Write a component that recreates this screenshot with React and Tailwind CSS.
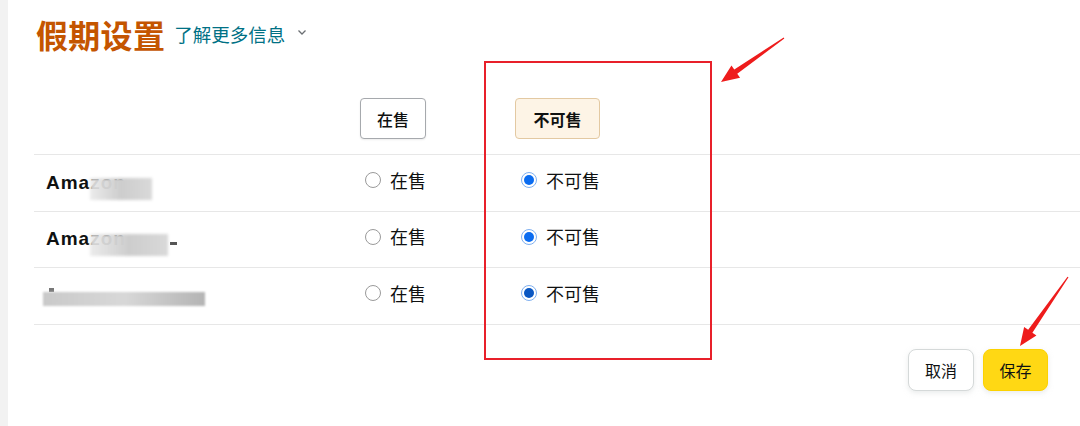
import React from "react";

const rows = [
  { name: "Amazon", blur: "w-[62px]", tail: false },
  { name: "Amazon", blur: "w-[78px]", tail: true },
  { name: "", blur: "", tail: false },
];

function Radio({ checked, dark }) {
  if (!checked) {
    return <span className="w-[16px] h-[16px] rounded-full border border-[#9a9a9a] bg-white shrink-0" />;
  }
  return (
    <span className="w-[16px] h-[16px] rounded-full border border-[#7fb0f0] bg-white shrink-0 flex items-center justify-center">
      <span className={`w-[10px] h-[10px] rounded-full ${dark ? "bg-[#0a57c2]" : "bg-[#0b6cf0]"}`} />
    </span>
  );
}

// tapered annotation arrow, computed from tail -> tip
function Arrow({ x1, y1, x2, y2 }) {
  const len = Math.hypot(x2 - x1, y2 - y1);
  const dx = (x2 - x1) / len;
  const dy = (y2 - y1) / len;
  const nx = -dy;
  const ny = dx;
  const head = 18;
  const cx = x2 - dx * head;
  const cy = y2 - dy * head;
  const p = (x, y, w) => `${x + nx * w},${y + ny * w}`;
  const pts = [
    p(x1, y1, 0.6),
    p(cx, cy, 2.6),
    p(cx, cy, 7.5),
    `${x2},${y2}`,
    p(cx, cy, -7.5),
    p(cx, cy, -2.6),
    p(x1, y1, -0.6),
  ].join(" ");
  return <polygon points={pts} fill="#ee1c1c" />;
}

export default function App() {
  const cjk = { fontFamily: '"Noto Sans CJK SC", "Noto Sans", sans-serif' };
  return (
    <div className="relative w-[1080px] h-[426px] flex bg-white overflow-hidden" style={cjk}>
      <div className="w-[8px] bg-[#f2f2f2] shrink-0" />
      <div className="flex-1 pl-[26px] flex flex-col">
        <div className="mt-[12px] h-[44px] flex items-center pl-[2px]">
          <span className="text-[32px] font-bold text-[#c45500] leading-none tracking-[0.3px]">假期设置</span>
          <span className="ml-[9px] text-[18.5px] text-[#007185] leading-none">了解更多信息</span>
          <svg width="10" height="7" viewBox="0 0 10 7" className="ml-[12px] -mt-[4px]" fill="none">
            <path d="M1.5 1.5L5 5L8.5 1.5" stroke="#6b6f73" strokeWidth="1.3" />
          </svg>
        </div>

        <div className="grid grid-cols-[326px_155px_1fr] pt-[42px] pb-[15px] border-b border-[#e7e7e7]">
          <div />
          <div>
            <span className="inline-flex items-center justify-center w-[66px] h-[41px] rounded-[4px] border border-[#a6a9ad] bg-white text-[16px] font-medium text-[#0f1111] shadow-[0_1px_2px_rgba(0,0,0,0.08)]">
              在售
            </span>
          </div>
          <div>
            <span className="inline-flex items-center justify-center w-[85px] h-[41px] rounded-[4px] border border-[#e3c9a2] bg-[#fdf4e6] text-[16px] font-bold text-[#0f1111]">
              不可售
            </span>
          </div>
        </div>

        {rows.map((r, i) => (
          <div key={i} className="grid grid-cols-[326px_155px_1fr] h-[56.6px] border-b border-[#e7e7e7] items-center">
            <div className="pl-[12px] flex items-center h-full">
              {r.name ? (
                <div className="relative flex items-center">
                  <span className="text-[19px] font-bold text-[#0f1111] tracking-[1px]" style={{ fontFamily: '"Liberation Sans", Arial, sans-serif' }}>
                    {r.name}
                  </span>
                  {r.tail && <span className="ml-[44px] mt-[8px] w-[7px] h-[3px] bg-[#555] blur-[0.4px]" />}
                  <span className={`absolute left-[44px] top-[9px] h-[22px] ${r.blur} bg-gradient-to-r from-[#e9e9e9]/90 via-[#cdcdcd] to-[#d9d9d9] blur-[1.5px]`} />
                </div>
              ) : (
                <div className="relative flex items-center -ml-[3px] mt-[6px]">
                  <span className="absolute left-[6px] -top-[4px] w-[5px] h-[4px] bg-[#777] blur-[0.5px]" />
                  <span className="h-[14px] w-[162px] bg-gradient-to-r from-[#c9c9c9] via-[#d8d8d8] to-[#b4b4b4] blur-[0.8px]" />
                </div>
              )}
            </div>
            <div className="flex items-center gap-[9px] pl-[5px] -mt-[5px]">
              <Radio checked={false} />
              <span className="text-[18px] text-[#0f1111]">在售</span>
            </div>
            <div className="flex items-center gap-[9px] pl-[6px] -mt-[5px]">
              <Radio checked dark={i === 2} />
              <span className="text-[18px] text-[#0f1111]">不可售</span>
            </div>
          </div>
        ))}

        <div className="flex justify-end gap-[9px] pr-[32px] mt-[24px]">
          <button className="w-[66px] h-[42px] rounded-[8px] border border-[#d5d9d9] bg-white text-[16px] text-[#0f1111] shadow-[0_2px_5px_rgba(213,217,217,0.5)]">
            取消
          </button>
          <button className="w-[65px] h-[42px] rounded-[8px] border border-[#fcd200] bg-[#ffd814] text-[16px] text-[#0f1111] shadow-[0_2px_5px_rgba(213,217,217,0.5)]">
            保存
          </button>
        </div>
      </div>

      <div className="absolute left-[484px] top-[61px] w-[228px] h-[299px] border-2 border-[#e8202a] pointer-events-none" />
      <svg className="absolute left-0 top-0 pointer-events-none" width="1080" height="426">
        <Arrow x1={784} y1={38} x2={721} y2={82} />
        <Arrow x1={1068} y1={277} x2={1020} y2={346} />
      </svg>
    </div>
  );
}
